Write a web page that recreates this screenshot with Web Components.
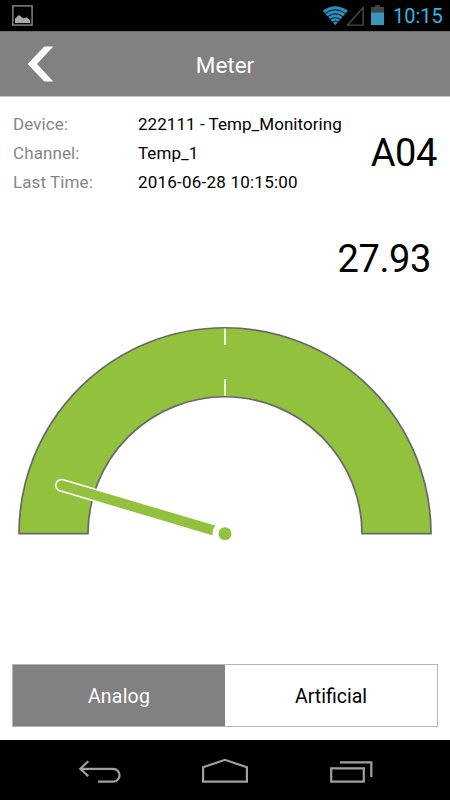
<!DOCTYPE html>
<html lang="en">
<head>
<meta charset="utf-8">
<title>Meter</title>
<style>
  html, body {
    margin: 0;
    height: 100%;
    background: #fff;
    font-family: Roboto, "Liberation Sans", sans-serif;
  }
</style>
</head>
<body>
<meter-app></meter-app>

<script>
class StatusBar extends HTMLElement {

  constructor () {
    super()
    this.shadow = this.attachShadow({ mode: 'open' })
    this.time = this.getAttribute('time')
  }

  connectedCallback () {
    this.render()
  }

  render () {
    this.shadow.innerHTML =
    /*html*/`
    <style>
      :host {
        display: flex;
        align-items: center;
        height: 31px;
        padding: 0 8px 0 12px;
        box-sizing: border-box;
        background: #000;
        color: #33b5e5;
      }
      svg {
        display: block;
      }
      .icons {
        margin-left: auto;
      }
      .time {
        width: 49px;
        margin-left: 9px;
        font-size: 20px;
        line-height: 32px;
        white-space: nowrap;
      }
    </style>
    <svg width="21" height="31" viewBox="12 0 21 31">
      <rect x="12.9" y="5.9" width="19.2" height="19.2" fill="none" stroke="#8c8c8c" stroke-width="1.4"/>
      <path d="M15 23V18.5L19 15L23.5 18.5L26.5 17.2L30 20V23Z" fill="#aaa"/>
    </svg>
    <svg class="icons" width="62" height="31" viewBox="322 0 62 31">
      <path d="M335.3 25.3L322.7 10.8Q335.3 1.5 348 10.8Z" fill="#2b8fbd"/>
      <g fill="none" stroke="#000" stroke-width="0.9">
        <path d="M325 13.5Q335.3 6 345.7 13.5"/>
        <path d="M327.5 16.8Q335.3 10.8 343.1 16.8"/>
        <path d="M329.8 19.8Q335.3 15.4 340.8 19.8"/>
        <path d="M332 22.4Q335.3 19.8 338.6 22.4"/>
      </g>
      <path d="M347.6 25.1H363.1V7.6Z" fill="none" stroke="#4c4c4c" stroke-width="1.4"/>
      <path d="M371 12.3V7H375V5.2H380V7H384V12.3Z" fill="#444"/>
      <rect x="371" y="12.3" width="13" height="12.7" fill="#3796bb"/>
    </svg>
    <span class="time">${this.time}</span>
    `
  }
}

customElements.define('status-bar', StatusBar);

class TitleBar extends HTMLElement {

  constructor () {
    super()
    this.shadow = this.attachShadow({ mode: 'open' })
  }

  connectedCallback () {
    this.render()
  }

  render () {
    this.shadow.innerHTML =
    /*html*/`
    <style>
      :host {
        display: grid;
        grid-template-columns: 80px 1fr 80px;
        height: 66px;
        box-sizing: border-box;
        border-top: 1px solid #6d6d6d;
        border-bottom: 1px solid #c4c4c4;
        background: #818181;
        color: #fff;
      }
      .title {
        text-align: center;
        font-size: 22.5px;
        line-height: 66px;
      }
    </style>
    <svg width="80" height="64" viewBox="0 32 80 64">
      <path d="M44.3 46.5H53.2L37 64L53.2 81.5H44.3L27.7 64Z" fill="#fff"/>
    </svg>
    <div class="title"><slot></slot></div>
    `
  }
}

customElements.define('title-bar', TitleBar);

class InfoRow extends HTMLElement {

  constructor () {
    super()
    this.shadow = this.attachShadow({ mode: 'open' })
    this.label = this.getAttribute('label')
  }

  connectedCallback () {
    this.render()
  }

  render () {
    this.shadow.innerHTML =
    /*html*/`
    <style>
      :host {
        display: flex;
        height: 29px;
        font-size: 17px;
        line-height: 29px;
        white-space: nowrap;
      }
      .label {
        width: 125px;
        color: #858585;
        letter-spacing: 0.1px;
      }
      .value {
        color: #000;
        letter-spacing: var(--value-spacing, 0.05px);
      }
    </style>
    <span class="label">${this.label}</span>
    <span class="value"><slot></slot></span>
    `
  }
}

customElements.define('info-row', InfoRow);

class AnalogMeter extends HTMLElement {

  constructor () {
    super()
    this.shadow = this.attachShadow({ mode: 'open' })
    this.angle = this.getAttribute('angle')
  }

  connectedCallback () {
    this.render()
  }

  render () {
    this.shadow.innerHTML =
    /*html*/`
    <style>
      :host {
        display: block;
        height: 230px;
      }
      svg {
        display: block;
      }
    </style>
    <svg width="450" height="230" viewBox="0 320 450 230">
      <path d="M19 533.7A206 206 0 0 1 431 533.7H362A137 137 0 0 0 88 533.7Z" fill="#92c13e" stroke="#68686a" stroke-width="1.7"/>
      <path d="M225 328.5V345M225 379V395.5" stroke="#e9f3d8" stroke-width="2"/>
      <g transform="rotate(${this.angle} 225 533.7)">
        <path d="M225 527.2H54.5A6.5 6.5 0 0 0 54.5 540.2H225Z" fill="#fff"/>
        <path d="M215 528.7H54.5A5 5 0 0 0 54.5 538.7H215Z" fill="#92c13e"/>
      </g>
      <circle cx="225" cy="533.7" r="12.5" fill="#fff"/>
      <circle cx="225" cy="533.7" r="6.5" fill="#92c13e"/>
    </svg>
    `
  }
}

customElements.define('analog-meter', AnalogMeter);

class ModeTab extends HTMLElement {

  constructor () {
    super()
    this.shadow = this.attachShadow({ mode: 'open' })
  }

  connectedCallback () {
    this.render()
  }

  render () {
    this.shadow.innerHTML =
    /*html*/`
    <style>
      :host {
        flex: 1;
        height: 61px;
        text-align: center;
        font-size: 19.5px;
        line-height: 63px;
        color: #000;
        background: #fff;
        cursor: pointer;
      }
      :host([selected]) {
        color: #fff;
        background: #818181;
        letter-spacing: 0.2px;
      }
    </style>
    <slot></slot>
    `
  }
}

customElements.define('mode-tab', ModeTab);

class NavBar extends HTMLElement {

  constructor () {
    super()
    this.shadow = this.attachShadow({ mode: 'open' })
  }

  connectedCallback () {
    this.render()
  }

  render () {
    this.shadow.innerHTML =
    /*html*/`
    <style>
      :host {
        display: block;
        height: 60px;
        background: #000;
      }
      svg {
        display: block;
      }
    </style>
    <svg width="450" height="60" viewBox="0 740 450 60" fill="none" stroke="#a0a0a0" stroke-width="2.2">
      <path d="M88.3 761.3L80.3 768.8L88.3 776.3M81 768.8H113.2A6.4 6.4 0 0 1 113.2 781.6H98"/>
      <path d="M203.1 781.6V767.3L225 759.8L246.9 767.3V781.6Z"/>
      <path d="M331.2 768.4H363.8V781.6H331.2ZM340 762.3H371.3V777"/>
    </svg>
    `
  }
}

customElements.define('nav-bar', NavBar);

class MeterApp extends HTMLElement {

  constructor () {
    super()
    this.shadow = this.attachShadow({ mode: 'open' })
  }

  connectedCallback () {
    this.render()
  }

  render () {
    this.shadow.innerHTML =
    /*html*/`
    <style>
      :host {
        display: flex;
        flex-direction: column;
        width: 450px;
        height: 800px;
        overflow: hidden;
        background: #fff;
      }
      .info {
        display: flex;
        justify-content: space-between;
        height: 86px;
        padding: 13px 13px 0 13px;
      }
      .dates {
        --value-spacing: 0.22px;
      }
      .unit, .reading {
        font-size: 38px;
        line-height: 46px;
        letter-spacing: -0.4px;
        color: #000;
      }
      .unit {
        margin-top: 20px;
      }
      .reading {
        margin-top: 40px;
        padding-right: 19px;
        text-align: right;
      }
      analog-meter {
        margin-top: 38px;
      }
      .tabs {
        display: flex;
        margin: auto 12px 13px;
        border: 1px solid #b4b4b4;
      }
    </style>
    <status-bar time="10:15"></status-bar>
    <title-bar>Meter</title-bar>
    <div class="info">
      <div>
        <info-row label="Device:">222111 - Temp_Monitoring</info-row>
        <info-row label="Channel:">Temp_1</info-row>
        <info-row class="dates" label="Last Time:">2016-06-28 10:15:00</info-row>
      </div>
      <div class="unit">A04</div>
    </div>
    <div class="reading">27.93</div>
    <analog-meter angle="16.5"></analog-meter>
    <div class="tabs">
      <mode-tab selected>Analog</mode-tab>
      <mode-tab>Artificial</mode-tab>
    </div>
    <nav-bar></nav-bar>
    `
  }
}

customElements.define('meter-app', MeterApp);
</script>
</body>
</html>
